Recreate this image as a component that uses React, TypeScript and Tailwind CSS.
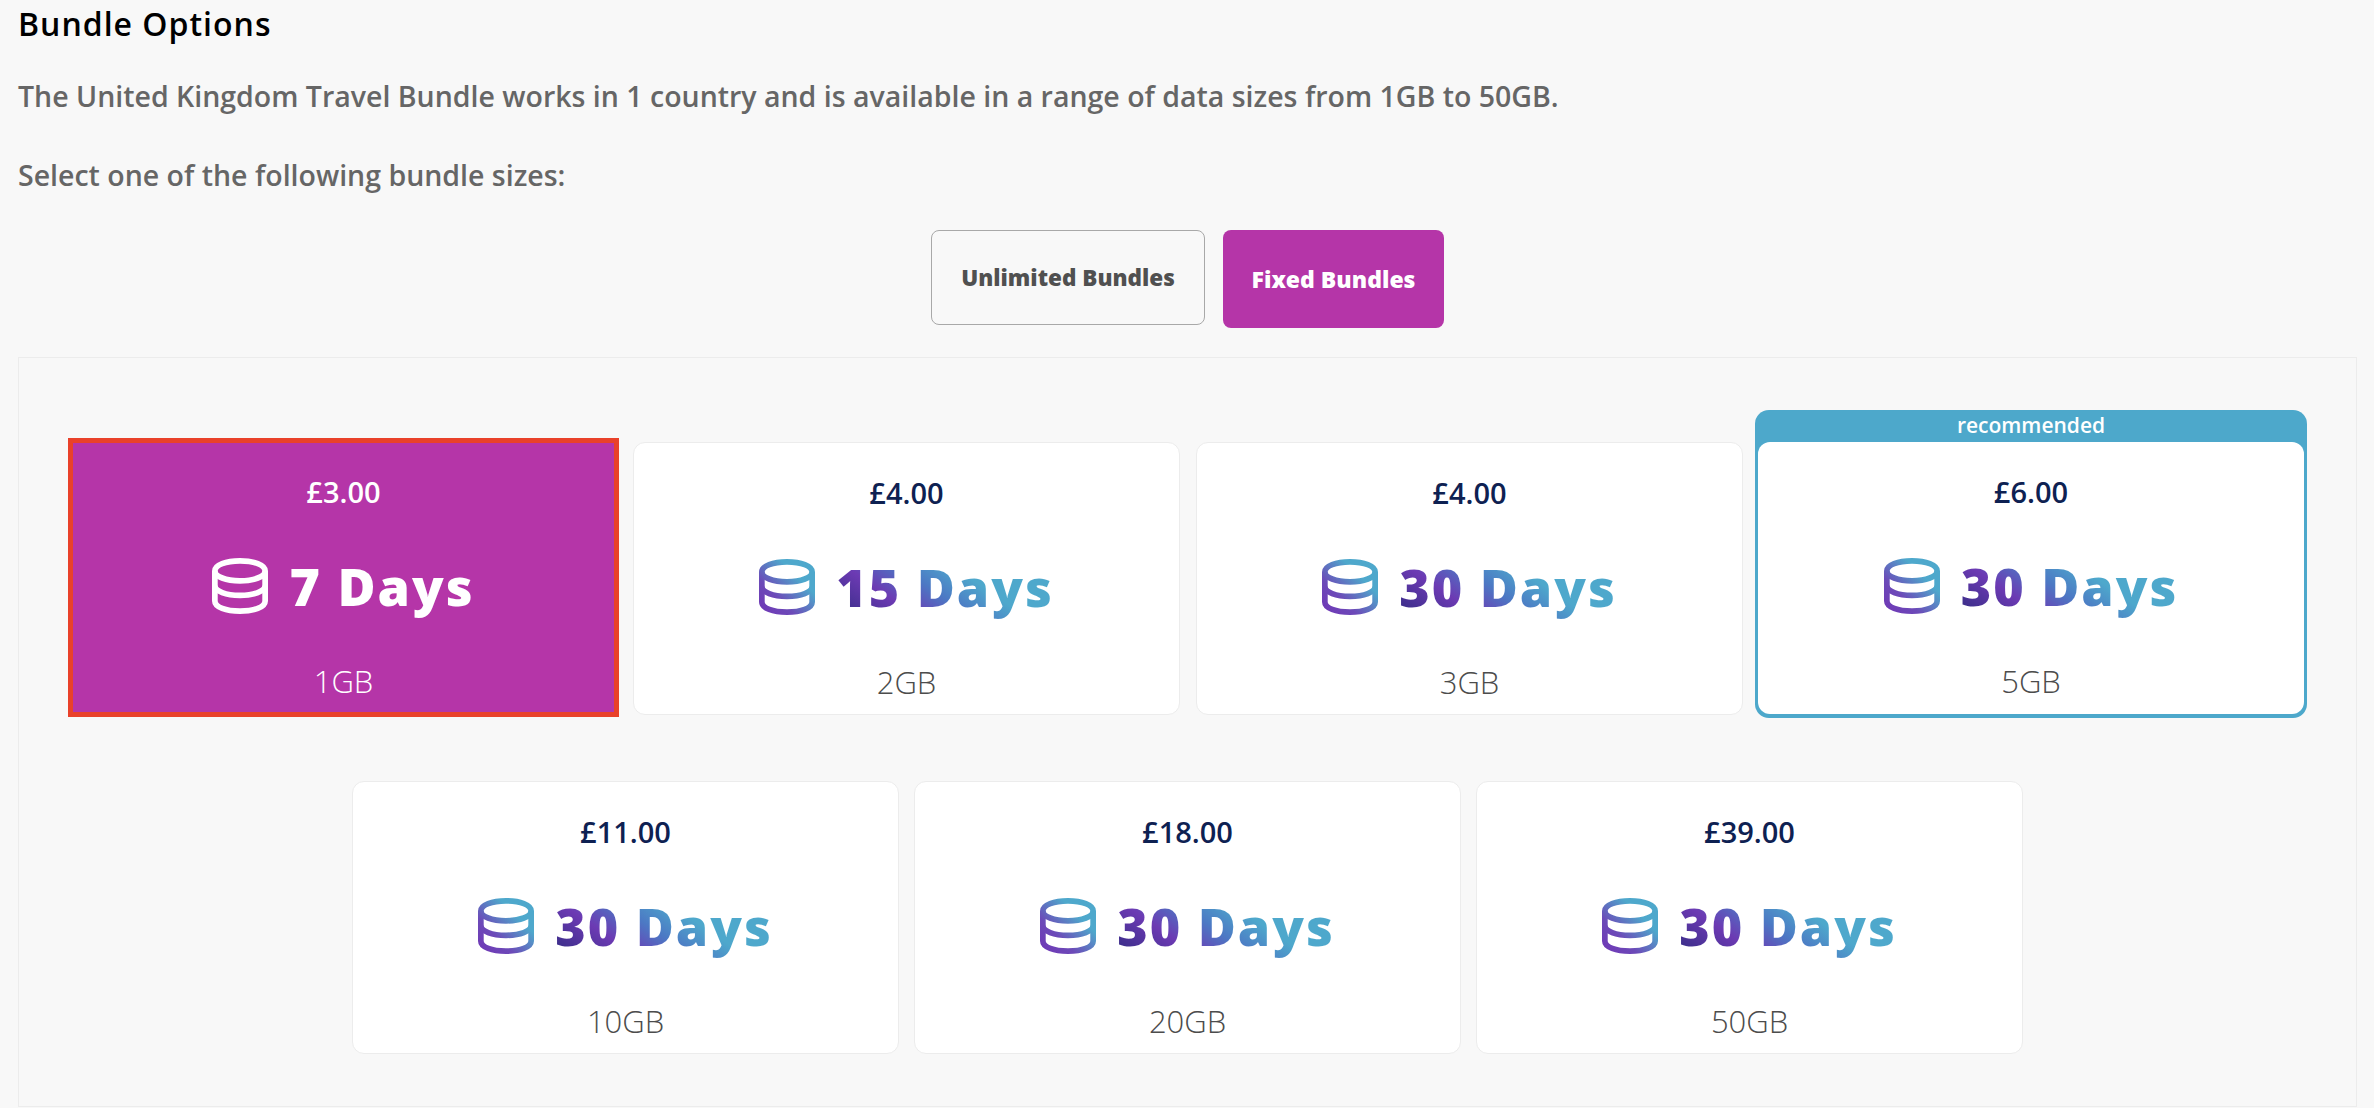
const FONT = "font-['Open_Sans','Noto_Sans',sans-serif]";

function Db({ id, white }: { id: string; white?: boolean }) {
  const stroke = white ? "#ffffff" : `url(#${id})`;
  return (
    <svg width="56" height="56" viewBox="0 0 54 54" fill="none" className="shrink-0">
      <defs>
        <linearGradient id={id} gradientUnits="userSpaceOnUse" x1="4" y1="50" x2="48" y2="6">
          <stop offset="0" stopColor="#6f3ab6" />
          <stop offset="0.3" stopColor="#6c4ab8" />
          <stop offset="0.75" stopColor="#4ea8cc" />
          <stop offset="1" stopColor="#4ea8cc" />
        </linearGradient>
      </defs>
      <path
        d="M2.750 12.500C2.750 6.500 13.500 2.750 27 2.750s24.250 3.750 24.250 9.750v29c0 6-10.750 9.750-24.250 9.750S2.750 47.500 2.750 41.500v-29Z"
        stroke={stroke}
        strokeWidth="5.500"
        strokeLinejoin="round"
      />
      <path d="M2.750 12.500c0 5.500 10.750 9.500 24.250 9.500s24.250-4 24.250-9.500" stroke={stroke} strokeWidth="5.500" />
      <path d="M2.750 26.500c0 5.500 10.750 9.500 24.250 9.500s24.250-4 24.250-9.500" stroke={stroke} strokeWidth="5.500" />
    </svg>
  );
}

function Card({
  price, days, size, selected, recommended, id,
}: { price: string; days: string; size: string; selected?: boolean; recommended?: boolean; id: string }) {
  const body = (
    <>
      <div className={`pt-[32px] text-[29px] leading-[36px] font-semibold ${selected ? "text-white" : "text-[#0e2152]"}`}>{price}</div>
      <div className="mt-[40px] flex h-[72px] items-center gap-[21px]">
        <Db id={id} white={selected} />
        <span
          className={`text-[52px] leading-[72px] font-extrabold tracking-[2px] ${
            selected
              ? "text-white"
              : "bg-[linear-gradient(35deg,#2b2a7c_0%,#6c3ab3_28%,#4c78c4_45%,#4ea8cc_62%,#4ea8cc_100%)] bg-clip-text text-transparent"
          }`}
        >
          {days}
        </span>
      </div>
      <div className={`mt-[40px] text-[31px] leading-[38px] font-light ${selected ? "text-white" : "text-[#4c4c4c]"}`}>{size}</div>
    </>
  );
  if (selected) {
    return (
      <div className="-mt-[2px] h-[275px] w-[547px] shrink-0 bg-white outline-[5px] -outline-offset-3 outline-[#e9412a] outline-solid">
        <div className="flex h-full flex-col items-center rounded-[6px] bg-[#b535a8] pt-[2px]">{body}</div>
      </div>
    );
  }
  if (recommended) {
    return (
      <div className="-mt-[32px] -ml-[4px] flex w-[552px] shrink-0 flex-col items-center rounded-[14px] bg-[#4da8cb] px-[3px] pb-[4px]">
        <div className="flex h-[32px] items-center text-[21px] font-semibold text-white">recommended</div>
        <div className="flex h-[272px] w-[546px] flex-col items-center rounded-[12px] bg-white">{body}</div>
      </div>
    );
  }
  return <div className="flex h-[273px] w-[547px] shrink-0 flex-col items-center rounded-[12px] border border-[#ececec] bg-white">{body}</div>;
}

export default function App() {
  return (
    <div className={`h-[1108px] w-full overflow-hidden bg-[#f8f8f8] px-[18px] ${FONT}`}>
      <h2 className="pt-[6px] text-[32px] leading-[36px] font-semibold tracking-[1px] text-black">Bundle Options</h2>
      <p className="mt-[36px] text-[28.500px] leading-[36px] font-semibold text-[#666666]">
        The United Kingdom Travel Bundle works in 1 country and is available in a range of data sizes from 1GB to 50GB.
      </p>
      <p className="mt-[43px] text-[28.500px] leading-[36px] font-semibold text-[#666666]">Select one of the following bundle sizes:</p>
      <div className="mt-[37px] flex items-start justify-center gap-[18px] pl-[1px]">
        <button className="h-[95px] w-[274px] rounded-[8px] border border-[#a8a8a8] text-[22.500px] font-extrabold text-[#505050]">Unlimited Bundles</button>
        <button className="h-[98px] w-[221px] rounded-[8px] bg-[#b535a8] text-[23px] font-extrabold text-white">Fixed Bundles</button>
      </div>
      <div className="mt-[29px] h-[750px] w-[2339px] border border-[#ececec] pt-[84px]">
        <div className="flex items-start justify-center gap-[16px] pl-[2px]">
          <Card id="a" price="£3.00" days="7 Days" size="1GB" selected />
          <Card id="b" price="£4.00" days="15 Days" size="2GB" />
          <Card id="c" price="£4.00" days="30 Days" size="3GB" />
          <Card id="d" price="£6.00" days="30 Days" size="5GB" recommended />
        </div>
        <div className="mt-[63px] flex items-start justify-center gap-[15px]">
          <Card id="e" price="£11.00" days="30 Days" size="10GB" />
          <Card id="f" price="£18.00" days="30 Days" size="20GB" />
          <Card id="g" price="£39.00" days="30 Days" size="50GB" />
        </div>
      </div>
    </div>
  );
}
